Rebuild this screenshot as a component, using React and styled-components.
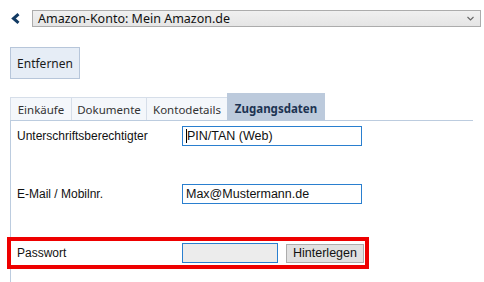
import React from "react";
import styled, { createGlobalStyle } from "styled-components";

const GlobalStyle = createGlobalStyle`
  * {
    margin: 0;
    padding: 0;
    box-sizing: border-box;
  }

  body {
    margin: 0;
    background: #ffffff;
    font-family: 'Segoe UI', 'Noto Sans', sans-serif;
    width: 484px;
    height: 282px;
    overflow: hidden;
  }
`;

const Page = styled.div`
  display: flex;
  flex-direction: column;
  width: 484px;
  height: 282px;
`;

const TopBar = styled.div`
  display: flex;
  align-items: center;
  gap: 12px;
  padding: 10px 3px 0 11px;
  height: 27px;
`;

const BackIcon = styled.svg`
  width: 9px;
  height: 11px;
  flex-shrink: 0;
`;

const Select = styled.div`
  flex: 1;
  height: 17px;
  display: flex;
  align-items: center;
  justify-content: space-between;
  padding: 0 6px 0 5px;
  border: 1px solid #acacac;
  background: linear-gradient(#f0f0f0, #e5e5e5);
  font-size: 12.5px;
  color: #111;
`;

const Toolbar = styled.div`
  display: flex;
  padding: 20px 0 0 10px;
  height: 52px;
`;

const ToolButton = styled.button`
  width: 70px;
  height: 32px;
  border: 1px solid #b7c6da;
  background: #e6edf6;
  font-family: inherit;
  font-size: 12px;
  color: #1a1a1a;
`;

const TabBar = styled.div`
  display: flex;
  align-items: flex-end;
  margin: 14px 11px 0 10px;
  height: 28px;
  border-bottom: 1px solid #bcccdf;
`;

const Tab = styled.div`
  width: ${(p) => p.$w}px;
  height: ${(p) => (p.$active ? 27 : 23)}px;
  display: flex;
  align-items: center;
  justify-content: center;
  font-size: 11.5px;
  font-weight: ${(p) => (p.$active ? 700 : 400)};
  color: ${(p) => (p.$active ? "#1c3352" : "#333")};
  background: ${(p) => (p.$active ? "#bccadc" : "#f4f7fb")};
  border: ${(p) => (p.$active ? "none" : "1px solid #d6dee9")};
  border-bottom: none;
  margin-left: ${(p) => (p.$first ? 0 : -1)}px;
  padding-top: ${(p) => (p.$active ? 3 : 0)}px;
`;

const Panel = styled.div`
  flex: 1;
  margin-left: 10px;
  border-left: 1px solid #bcccdf;
  display: flex;
  flex-direction: column;
  gap: 34px;
  padding-top: 3px;
`;

const Row = styled.div`
  display: flex;
  align-items: center;
  width: 354px;
  height: 24px;
  padding-left: 6px;
  outline: ${(p) => (p.$highlight ? "4px solid #ee0000" : "none")};
  margin-top: ${(p) => (p.$highlight ? 1 : 0)}px;
  font-family: 'Liberation Sans', Arial, sans-serif;
`;

const Label = styled.div`
  width: 165px;
  font-size: 12px;
  color: #111;
`;

const Field = styled.div`
  width: ${(p) => p.$w}px;
  height: 20px;
  border: 1px solid #2a7fcf;
  background: ${(p) => (p.$empty ? "#ececec" : "#fff")};
  display: flex;
  align-items: center;
  padding-left: 3px;
  font-size: 12.5px;
  color: #111;
`;

const Caret = styled.span`
  display: inline-block;
  width: 1px;
  height: 14px;
  background: #000;
`;

const SmallButton = styled.button`
  width: 78px;
  height: 19px;
  margin-left: 8px;
  border: 1px solid #adadad;
  background: #e1e1e1;
  font-family: 'Liberation Sans', Arial, sans-serif;
  font-size: 12.5px;
  color: #111;
`;

const tabs = [
  { name: "Einkäufe", w: 62 },
  { name: "Dokumente", w: 76 },
  { name: "Kontodetails", w: 82 },
  { name: "Zugangsdaten", w: 98, active: true },
];

export default function App() {
  return (
    <>
      <GlobalStyle />
      <Page>
        <TopBar>
          <BackIcon viewBox="0 0 9 11">
            <polyline
              points="7.5,1.2 2.5,5.5 7.5,9.8"
              fill="none"
              stroke="#123a63"
              strokeWidth="3"
            />
          </BackIcon>
          <Select>
            <span>Amazon-Konto: Mein Amazon.de</span>
            <svg width="7" height="5" viewBox="0 0 7 5">
              <polyline points="0.5,1 3.5,4 6.5,1" fill="none" stroke="#666" strokeWidth="1.1" />
            </svg>
          </Select>
        </TopBar>

        <Toolbar>
          <ToolButton>Entfernen</ToolButton>
        </Toolbar>

        <TabBar>
          {tabs.map((t, i) => (
            <Tab key={t.name} $w={t.w} $active={t.active} $first={i === 0}>
              {t.name}
            </Tab>
          ))}
        </TabBar>

        <Panel>
          <Row>
            <Label>Unterschriftsberechtigter</Label>
            <Field $w={180}>
              <Caret />
              PIN/TAN (Web)
            </Field>
          </Row>
          <Row>
            <Label>E-Mail / Mobilnr.</Label>
            <Field $w={180}>Max@Mustermann.de</Field>
          </Row>
          <Row $highlight>
            <Label>Passwort</Label>
            <Field $w={96} $empty />
            <SmallButton>Hinterlegen</SmallButton>
          </Row>
        </Panel>
      </Page>
    </>
  );
}
